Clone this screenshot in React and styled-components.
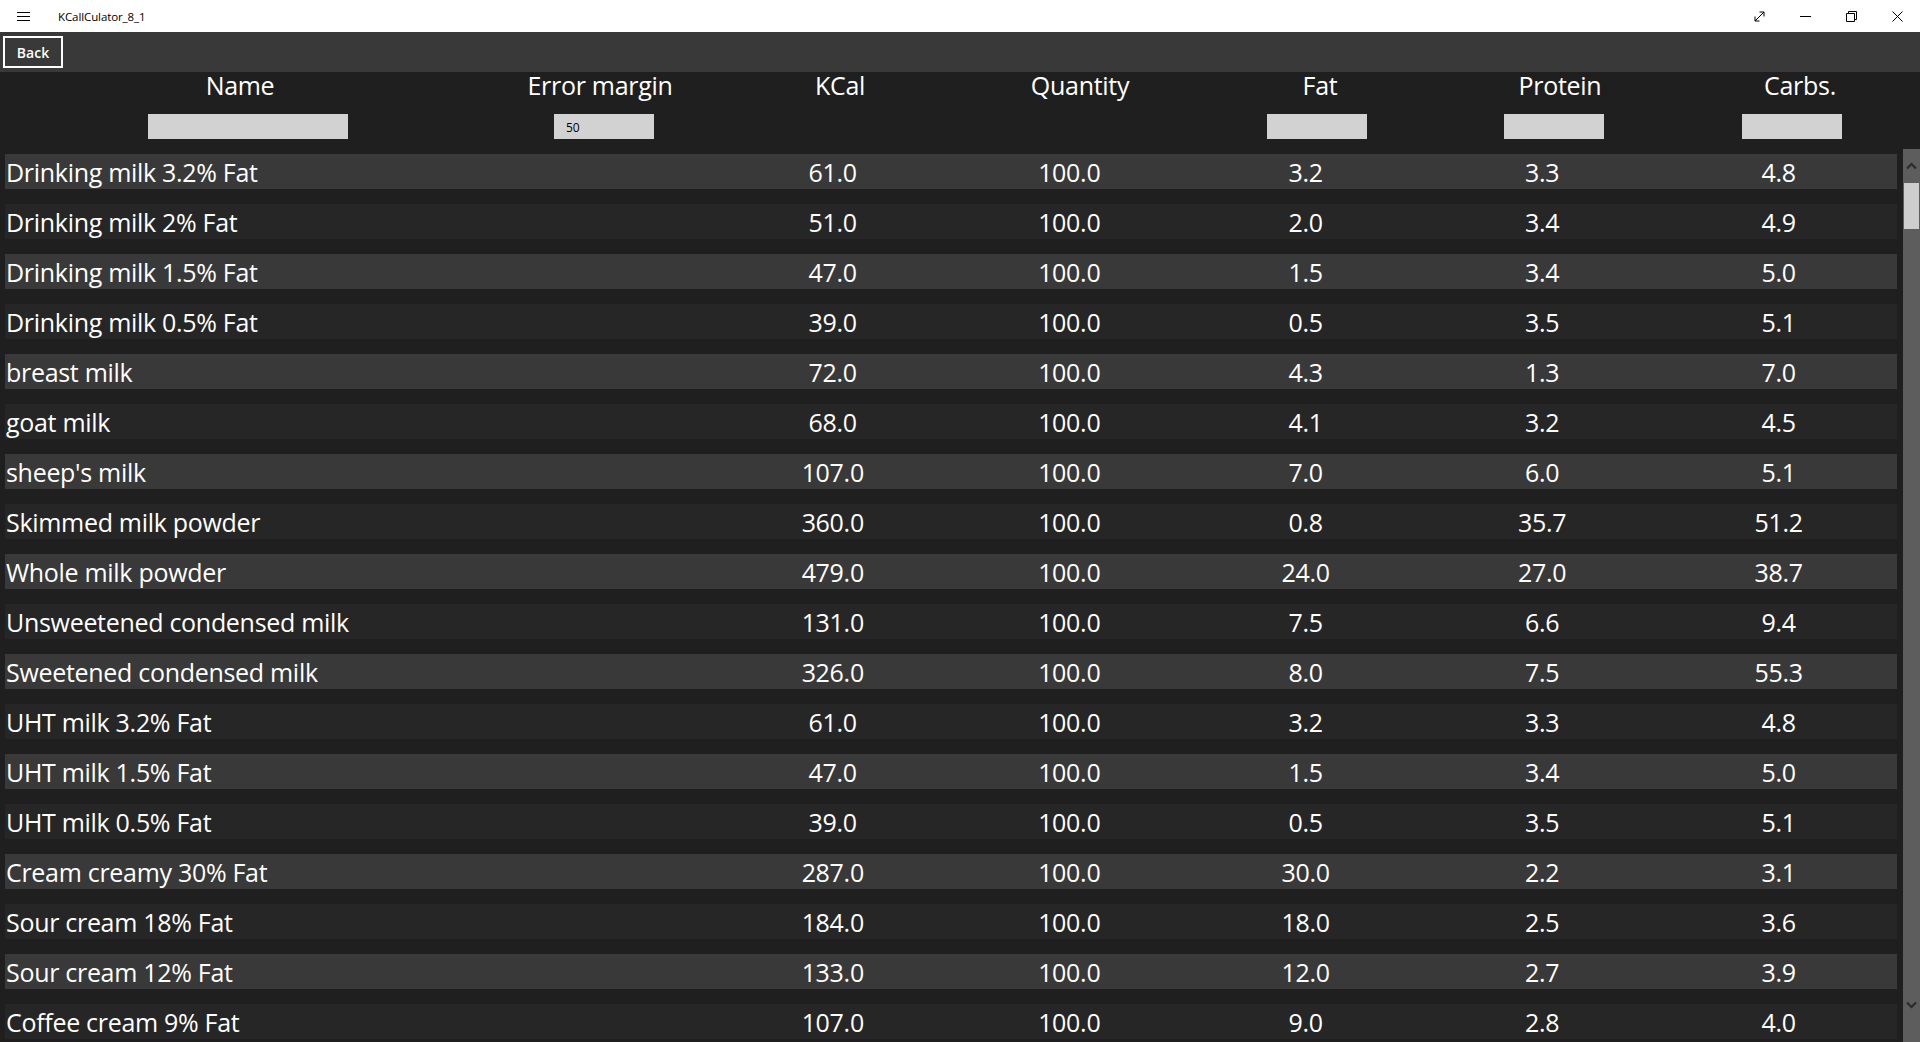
import React from "react";
import styled, { createGlobalStyle } from "styled-components";

const GlobalStyle = createGlobalStyle`
  html, body { margin: 0; padding: 0; background: #1f1f1f; overflow: hidden; }
  * { box-sizing: border-box; }
`;

const FONT = `"Segoe UI", "Open Sans", "Noto Sans", sans-serif`;

const Window = styled.div`
  height: 1042px;
  display: flex;
  flex-direction: column;
  overflow: hidden;
  font-family: ${FONT};
  background: #1f1f1f;
`;

const TitleBar = styled.div`
  height: 32px;
  flex: 0 0 32px;
  background: #ffffff;
  display: flex;
  align-items: center;
`;

const IconButton = styled.div`
  width: 46px;
  height: 32px;
  display: flex;
  align-items: center;
  justify-content: center;
  color: #000;
`;

const Title = styled.div`
  font-size: 11.5px;
  color: #000;
  margin-left: 12px;
  flex: 1;
  letter-spacing: -0.1px;
`;

const Toolbar = styled.div`
  height: 40px;
  flex: 0 0 40px;
  background: #393939;
  padding: 4px 3px;
  display: flex;
  align-items: flex-start;
`;

const BackButton = styled.button`
  width: 60px;
  height: 32px;
  border: 2px solid #ffffff;
  background: transparent;
  color: #ffffff;
  font-family: ${FONT};
  font-weight: 600;
  font-size: 14px;
  padding: 0;
  display: flex;
  align-items: center;
  justify-content: center;
`;

const Header = styled.div`
  height: 77px;
  flex: 0 0 77px;
  display: grid;
  grid-template-columns: repeat(8, 240px);
`;

const HeaderCell = styled.div`
  grid-column: span ${(p) => p.$span || 1};
  display: flex;
  flex-direction: column;
  align-items: center;
`;

const HeaderTitle = styled.div`
  color: #ffffff;
  font-size: 25px;
  line-height: 26px;
  letter-spacing: -0.3px;
  height: 42px;
`;

const FilterInput = styled.div`
  width: ${(p) => p.$w}px;
  height: 25px;
  background: #d2d2d2;
  transform: translateX(${(p) => p.$shift}px);
  font-size: 12px;
  color: #000;
  padding-left: 12px;
  line-height: 27px;
`;

const Body = styled.div`
  flex: 1;
  min-height: 0;
  display: flex;
`;

const List = styled.div`
  flex: 1;
  padding: 5px 6px 0 5px;
  display: flex;
  flex-direction: column;
  gap: 15px;
  overflow: hidden;
`;

const Row = styled.div`
  flex: 0 0 35px;
  height: 35px;
  display: grid;
  grid-template-columns: repeat(8, 1fr);
  background: ${(p) => (p.$odd ? "#393939" : "#262626")};
  color: #ffffff;
  font-size: 25px;
  line-height: 37px;
  letter-spacing: -0.3px;
  overflow: hidden;
`;

const NameCell = styled.div`
  grid-column: span 3;
  padding-left: 1px;
  white-space: nowrap;
`;

const ValueCell = styled.div`
  text-align: center;
`;

const ScrollBar = styled.div`
  width: 17px;
  flex: 0 0 17px;
  background: #5d5d5d;
  display: flex;
  flex-direction: column;
  align-items: center;
  padding-bottom: 20px;
`;

const ArrowBox = styled.div`
  height: 34px;
  flex: 0 0 34px;
  display: flex;
  align-items: center;
  justify-content: center;
`;

const Thumb = styled.div`
  width: 15px;
  height: 46px;
  flex: 0 0 46px;
  background: #cdcdcd;
`;

const Track = styled.div`
  flex: 1;
`;

const rows = [
  ["Drinking milk 3.2% Fat", "61.0", "3.2", "3.3", "4.8"],
  ["Drinking milk 2% Fat", "51.0", "2.0", "3.4", "4.9"],
  ["Drinking milk 1.5% Fat", "47.0", "1.5", "3.4", "5.0"],
  ["Drinking milk 0.5% Fat", "39.0", "0.5", "3.5", "5.1"],
  ["breast milk", "72.0", "4.3", "1.3", "7.0"],
  ["goat milk", "68.0", "4.1", "3.2", "4.5"],
  ["sheep's milk", "107.0", "7.0", "6.0", "5.1"],
  ["Skimmed milk powder", "360.0", "0.8", "35.7", "51.2"],
  ["Whole milk powder", "479.0", "24.0", "27.0", "38.7"],
  ["Unsweetened condensed milk", "131.0", "7.5", "6.6", "9.4"],
  ["Sweetened condensed milk", "326.0", "8.0", "7.5", "55.3"],
  ["UHT milk 3.2% Fat", "61.0", "3.2", "3.3", "4.8"],
  ["UHT milk 1.5% Fat", "47.0", "1.5", "3.4", "5.0"],
  ["UHT milk 0.5% Fat", "39.0", "0.5", "3.5", "5.1"],
  ["Cream creamy 30% Fat", "287.0", "30.0", "2.2", "3.1"],
  ["Sour cream 18% Fat", "184.0", "18.0", "2.5", "3.6"],
  ["Sour cream 12% Fat", "133.0", "12.0", "2.7", "3.9"],
  ["Coffee cream 9% Fat", "107.0", "9.0", "2.8", "4.0"],
];

const Hamburger = () => (
  <svg width="13" height="11" viewBox="0 0 13 11" fill="none" stroke="#000" strokeWidth="1">
    <path d="M0 1.5H13M0 5.5H13M0 9.5H13" />
  </svg>
);

const ExpandIcon = () => (
  <svg width="11" height="11" viewBox="0 0 11 11" fill="none" stroke="#000" strokeWidth="1">
    <path d="M1 10L10 1M5.5 1H10V5.5M1 5.5V10H5.5" />
  </svg>
);

const MinIcon = () => (
  <svg width="11" height="11" viewBox="0 0 11 11" fill="none" stroke="#000" strokeWidth="1">
    <path d="M0 5.5H11" />
  </svg>
);

const RestoreIcon = () => (
  <svg width="11" height="11" viewBox="0 0 11 11" fill="none" stroke="#000" strokeWidth="1">
    <path d="M0.5 2.5H8.5V10.5H0.5Z" />
    <path d="M2.5 2.5V0.5H10.5V8.5H8.5" />
  </svg>
);

const CloseIcon = () => (
  <svg width="11" height="11" viewBox="0 0 11 11" fill="none" stroke="#000" strokeWidth="1">
    <path d="M0.5 0.5L10.5 10.5M10.5 0.5L0.5 10.5" />
  </svg>
);

const Chevron = ({ down }) => (
  <svg width="11" height="8" viewBox="0 0 11 8" fill="none" stroke="#2b2b2b" strokeWidth="2.2">
    <path d={down ? "M1 1.5L5.5 6L10 1.5" : "M1 6.5L5.5 2L10 6.5"} />
  </svg>
);

export default function App() {
  return (
    <>
      <GlobalStyle />
      <Window>
        <TitleBar>
          <IconButton>
            <Hamburger />
          </IconButton>
          <Title>KCallCulator_8_1</Title>
          <IconButton>
            <ExpandIcon />
          </IconButton>
          <IconButton>
            <MinIcon />
          </IconButton>
          <IconButton>
            <RestoreIcon />
          </IconButton>
          <IconButton>
            <CloseIcon />
          </IconButton>
        </TitleBar>
        <Toolbar>
          <BackButton>Back</BackButton>
        </Toolbar>
        <Header>
          <HeaderCell $span={2}>
            <HeaderTitle>Name</HeaderTitle>
            <FilterInput $w={200} $shift={8} />
          </HeaderCell>
          <HeaderCell>
            <HeaderTitle>Error margin</HeaderTitle>
            <FilterInput $w={100} $shift={4}>50</FilterInput>
          </HeaderCell>
          <HeaderCell>
            <HeaderTitle>KCal</HeaderTitle>
          </HeaderCell>
          <HeaderCell>
            <HeaderTitle>Quantity</HeaderTitle>
          </HeaderCell>
          <HeaderCell>
            <HeaderTitle>Fat</HeaderTitle>
            <FilterInput $w={100} $shift={-3} />
          </HeaderCell>
          <HeaderCell>
            <HeaderTitle>Protein</HeaderTitle>
            <FilterInput $w={100} $shift={-6} />
          </HeaderCell>
          <HeaderCell>
            <HeaderTitle>Carbs.</HeaderTitle>
            <FilterInput $w={100} $shift={-8} />
          </HeaderCell>
        </Header>
        <Body>
          <List>
            {rows.map((r, i) => (
              <Row key={i} $odd={i % 2 === 0}>
                <NameCell>{r[0]}</NameCell>
                <ValueCell>{r[1]}</ValueCell>
                <ValueCell>100.0</ValueCell>
                <ValueCell>{r[2]}</ValueCell>
                <ValueCell>{r[3]}</ValueCell>
                <ValueCell>{r[4]}</ValueCell>
              </Row>
            ))}
          </List>
          <ScrollBar>
            <ArrowBox>
              <Chevron />
            </ArrowBox>
            <Thumb />
            <Track />
            <ArrowBox>
              <Chevron down />
            </ArrowBox>
          </ScrollBar>
        </Body>
      </Window>
    </>
  );
}
